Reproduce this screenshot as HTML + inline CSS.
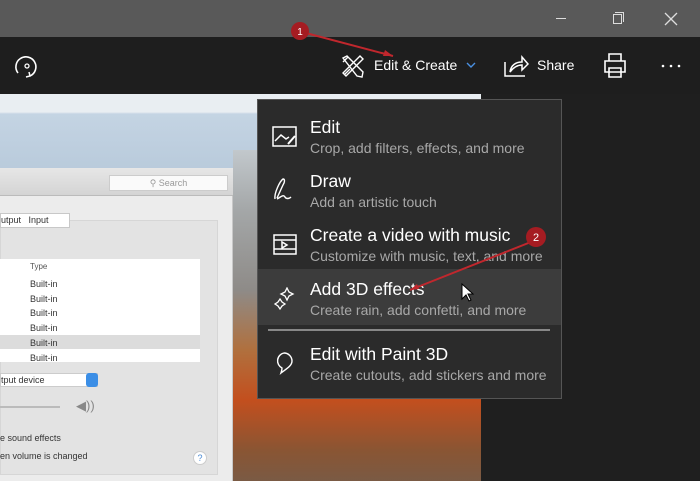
<!DOCTYPE html>
<html><head><style>
*{margin:0;padding:0;box-sizing:border-box}
body{width:700px;height:481px;overflow:hidden;background:#1f1f1f;font-family:"Liberation Sans",sans-serif;position:relative}
.abs{position:absolute}
.t{color:#fff;font-size:14px}
.menu .h{position:absolute;left:52px;color:#fff;font-size:17.5px}
.menu .s{position:absolute;left:52px;color:#a8a8a8;font-size:14px}
.mac{font-size:9px;color:#333}
</style></head><body>
<div class="abs" style="left:0;top:0;width:700px;height:37px;background:#595959"></div>
<div class="abs" style="left:556px;top:18px;width:10px;height:1px;background:#ddd"></div>
<div class="abs" style="left:613px;top:14px;width:9px;height:10px;border:1px solid #ddd"></div>
<div class="abs" style="left:615px;top:12px;width:9px;height:10px;border-top:1px solid #ddd;border-right:1px solid #ddd"></div>
<svg class="abs" style="left:664px;top:12px" width="14" height="14"><path d="M1 1L13 13M13 1L1 13" stroke="#ddd" stroke-width="1.3"/></svg>
<div class="abs" style="left:0;top:37px;width:700px;height:57px;background:#1e1e1e"></div>
<svg class="abs" style="left:12px;top:53px" width="30" height="28"><path d="M6 20A10 10 0 1 1 18 23" fill="none" stroke="#fff" stroke-width="1.6"/><circle cx="15" cy="13" r="2" fill="none" stroke="#fff" stroke-width="1.3"/><path d="M17 19l1 4-4 1" fill="none" stroke="#fff" stroke-width="1.5"/></svg>
<svg class="abs" style="left:340px;top:53px" width="26" height="26"><path d="M3 5l4-2 16 16-1 5-5-1z M4 22l6-6 M8 4L3 9 M20 3l3 3-17 17-3-3z" fill="none" stroke="#fff" stroke-width="1.4"/></svg>
<div class="abs t" style="left:374px;top:57px">Edit &amp; Create</div>
<svg class="abs" style="left:466px;top:62px" width="10" height="6"><path d="M1 1l4 4 4-4" fill="none" stroke="#4a90e2" stroke-width="1.4"/></svg>
<svg class="abs" style="left:503px;top:52px" width="26" height="26"><path d="M2 10v14h20 M7 20c1-7 6-10 12-10v-5l6 7-6 6v-5c-5 0-9 3-12 7z" fill="none" stroke="#fff" stroke-width="1.5"/></svg>
<div class="abs t" style="left:537px;top:57px">Share</div>
<svg class="abs" style="left:602px;top:52px" width="26" height="27"><path d="M7 9V2h12v7 M3 9h20v11H3z M7 16h12v9H7z" fill="none" stroke="#fff" stroke-width="1.6"/></svg>
<svg class="abs" style="left:660px;top:64px" width="22" height="4"><circle cx="3" cy="2" r="1.3" fill="#fff"/><circle cx="11" cy="2" r="1.3" fill="#fff"/><circle cx="19" cy="2" r="1.3" fill="#fff"/></svg>
<div class="abs" style="left:0;top:94px;width:481px;height:387px;background:linear-gradient(#e9eef2 0,#e9eef2 18px,#c4d4e3 20px,#b8cadb 80px,#d7dadc 100%)"></div>
<div class="abs" style="left:233px;top:150px;width:248px;height:331px;background:linear-gradient(#c2c8cc 0,#a4a7a8 60px,#8e8b88 140px,#b0703e 200px,#c34f1e 250px,#8a5533 300px,#7a5a44 331px)"></div>
<div class="abs" style="left:0;top:168px;width:233px;height:313px;background:#ececec;border-right:1px solid #c8c8c8"></div>
<div class="abs" style="left:0;top:168px;width:233px;height:28px;background:linear-gradient(#e6e6e6,#d4d4d4);border-bottom:1px solid #bbb"></div>
<div class="abs mac" style="left:109px;top:175px;width:119px;height:16px;background:#fafafa;border:1px solid #ccc;color:#999;text-align:center;line-height:14px">⚲ Search</div>
<div class="abs" style="left:0;top:220px;width:218px;height:255px;background:#e3e3e3;border:1px solid #d6d6d6"></div>
<div class="abs mac" style="left:0;top:213px;width:70px;height:15px;background:#fff;border:1px solid #c8c8c8;line-height:13px">utput &nbsp; Input</div>
<div class="abs mac" style="left:0;top:259px;width:200px;height:103px;background:#fff"></div>
<div class="abs mac" style="left:30px;top:262px;font-size:8px;color:#555">Type</div>
<div class="abs" style="left:0;top:335px;width:200px;height:14px;background:#dcdcdc"></div>
<div class="abs mac" style="left:30px;top:277px;line-height:14.7px">Built-in<br>Built-in<br>Built-in<br>Built-in<br>Built-in<br>Built-in</div>
<div class="abs mac" style="left:0;top:373px;width:98px;height:14px;background:#fff;border:1px solid #ccc;line-height:12px">tput device</div>
<div class="abs" style="left:86px;top:373px;width:12px;height:14px;background:#3b8ee6;border-radius:3px"></div>
<div class="abs" style="left:0;top:406px;width:60px;height:2px;background:#bbb"></div>
<div class="abs mac" style="left:76px;top:398px;font-size:13px;color:#888">◀))</div>
<div class="abs mac" style="left:0;top:433px">e sound effects</div>
<div class="abs mac" style="left:0;top:451px">en volume is changed</div>
<div class="abs" style="left:193px;top:451px;width:14px;height:14px;border-radius:50%;background:#fff;border:1px solid #ccc;color:#4a8ad4;font-size:9px;text-align:center;line-height:12px">?</div>
<div class="abs menu" style="left:257px;top:99px;width:305px;height:300px;background:#2b2b2b;border:1px solid #555">
  <svg class="abs" style="left:14px;top:26px" width="26" height="22"><path d="M1 1h23v19H1z M3 15l6-6 5 4 3-2" fill="none" stroke="#fff" stroke-width="1.5"/><path d="M16 18l7-8" stroke="#fff" stroke-width="2"/></svg>
  <div class="h" style="top:17px">Edit</div><div class="s" style="top:40px">Crop, add filters, effects, and more</div>
  <svg class="abs" style="left:14px;top:77px" width="26" height="26"><path d="M3 22c-1-6 5-18 8-20 2 0 2 3 0 6L5 21 M5 22c4-2 6-5 8-2 1 2 4 2 6 0" fill="none" stroke="#fff" stroke-width="1.4"/></svg>
  <div class="h" style="top:71px">Draw</div><div class="s" style="top:94px">Add an artistic touch</div>
  <svg class="abs" style="left:14px;top:132px" width="26" height="24"><path d="M2 3h22v19H2z M2 8h22 M2 17h22 M10 10v6l5-3z" fill="none" stroke="#fff" stroke-width="1.5"/></svg>
  <div class="h" style="top:125px">Create a video with music</div><div class="s" style="top:148px">Customize with music, text, and more</div>
  <div class="abs" style="left:0;top:169px;width:303px;height:56px;background:#3c3c3c"></div>
  <svg class="abs" style="left:16px;top:187px" width="22" height="24"><path d="M13 1l2 4 4 2-4 2-2 4-2-4-4-2 4-2z M6 12l2 3 3 2-3 2-2 3-2-3-3-2 3-2z" fill="none" stroke="#fff" stroke-width="1.3"/></svg>
  <div class="h" style="top:179px">Add 3D effects</div><div class="s" style="top:202px">Create rain, add confetti, and more</div>
  <div class="abs" style="left:10px;top:229px;width:282px;height:2px;background:#888"></div>
  <svg class="abs" style="left:16px;top:251px" width="20" height="26"><path d="M10 2a8 8 0 0 1 8 8c0 5-6 8-11 12 1-3 1-5 1-5A8 8 0 0 1 10 2z" fill="none" stroke="#fff" stroke-width="1.4"/></svg>
  <div class="h" style="top:244px">Edit with Paint 3D</div><div class="s" style="top:267px">Create cutouts, add stickers and more</div>
</div>
<svg class="abs" style="left:461px;top:283px" width="14" height="20"><path d="M1 1v15l4-4 3 6 2-1-3-6h5z" fill="#fff" stroke="#000" stroke-width="1"/></svg>
<svg class="abs" style="left:0;top:0" width="700" height="481"><path d="M302 32L393 56" stroke="#c0272d" stroke-width="2"/><path d="M393 56l-8-6-2 6z" fill="#c0272d"/><path d="M536 240L410 290" stroke="#c0272d" stroke-width="2"/><path d="M410 290l9-1-2-5z" fill="#c0272d"/>
<circle cx="300" cy="31" r="9" fill="#a51c22"/><text x="300" y="35" font-size="10" fill="#fff" text-anchor="middle" font-family="Liberation Sans">1</text>
<circle cx="536" cy="237" r="10" fill="#a51c22"/><text x="536" y="241" font-size="11" fill="#fff" text-anchor="middle" font-family="Liberation Sans">2</text></svg>
</body></html>
